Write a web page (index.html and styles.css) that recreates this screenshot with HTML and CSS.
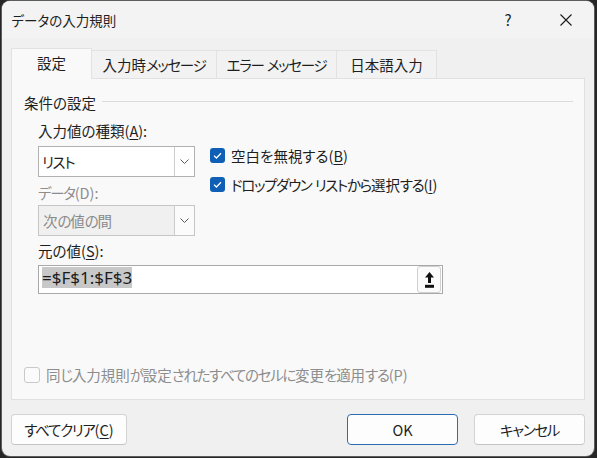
FILE: index.html
```html
<!DOCTYPE html>
<html lang="ja">
<head>
<meta charset="utf-8">
<title>データの入力規則</title>
<link rel="stylesheet" href="styles.css">
</head>
<body>
<div class="window">
  <header class="titlebar">
    <span class="title">データの入力規則</span>
    <div class="caption">
      <span class="cap-btn help">?</span>
      <span class="cap-btn close">
        <svg width="12" height="12" viewBox="0 0 12 12"><path d="M0.5 0.5 L11.5 11.5 M11.5 0.5 L0.5 11.5" stroke="#1b1b1b" stroke-width="1.1" fill="none"/></svg>
      </span>
    </div>
  </header>

  <div class="body">
    <div class="tabs">
      <div class="tab active"><span>設定</span></div>
      <div class="tab"><span>入力時<span class="k">メッセージ</span></span></div>
      <div class="tab"><span><span class="k">エラー</span> <span class="k">メッセージ</span></span></div>
      <div class="tab"><span>日本語入力</span></div>
    </div>

    <section class="panel">
      <div class="legend"><span>条件の設定</span><span class="rule"></span></div>

      <div class="group">
        <div class="fields">
          <div class="col-left">
            <div class="label">入力値の種類(<u>A</u>):</div>
            <div class="combo">
              <span class="combo-text"><span class="k">リスト</span></span>
              <span class="combo-btn">
                <svg width="9" height="5" viewBox="0 0 9 5"><path d="M0.5 0.5 L4.5 4.5 L8.5 0.5" stroke="#5a5a5a" stroke-width="1" fill="none"/></svg>
              </span>
            </div>
            <div class="label muted"><span class="k">データ</span>(D):</div>
            <div class="combo is-disabled">
              <span class="combo-text">次<span class="k">の</span>値<span class="k">の</span>間</span>
              <span class="combo-btn">
                <svg width="9" height="5" viewBox="0 0 9 5"><path d="M0.5 0.5 L4.5 4.5 L8.5 0.5" stroke="#5a5a5a" stroke-width="1" fill="none"/></svg>
              </span>
            </div>
          </div>

          <div class="col-right">
            <div class="check">
              <span class="box checked">
                <svg width="15" height="15" viewBox="0 0 15 15"><path d="M4 7.6 L6.4 10 L11 5.2" stroke="#fff" stroke-width="1.3" fill="none"/></svg>
              </span>
              <span>空白を無視する(<u>B</u>)</span>
            </div>
            <div class="check">
              <span class="box checked">
                <svg width="15" height="15" viewBox="0 0 15 15"><path d="M4 7.6 L6.4 10 L11 5.2" stroke="#fff" stroke-width="1.3" fill="none"/></svg>
              </span>
              <span><span class="k">ドロップダウン</span> <span class="k">リストから</span>選択<span class="k">する</span>(<u>I</u>)</span>
            </div>
          </div>
        </div>

        <div class="label source-label">元の値(<u>S</u>):</div>
        <div class="ref-input">
          <span class="sel">=$F$1:$F$3</span>
          <span class="collapse-btn">
            <svg width="9" height="16" viewBox="0 0 9 16"><path d="M4.5 0 L9 5.5 L6 5.5 L6 11 L3 11 L3 5.5 L0 5.5 Z" fill="#111"/><rect x="0" y="12.8" width="9" height="3" fill="#111"/></svg>
          </span>
        </div>
      </div>

      <div class="check apply muted">
        <span class="box empty"></span>
        <span>同<span class="k">じ</span>入力規則<span class="k">が</span>設定<span class="k">されたすべてのセルに</span>変更<span class="k">を</span>適用<span class="k">する</span>(P)</span>
      </div>
    </section>

    <div class="actions">
      <button class="btn wide"><span class="k">すべてクリア</span>(<u>C</u>)</button>
      <div class="actions-right">
        <button class="btn default">OK</button>
        <button class="btn"><span class="k">キャンセル</span></button>
      </div>
    </div>
  </div>
</div>
</body>
</html>
```

FILE: styles.css
```css
html, body {
  margin: 0;
  width: 597px;
  height: 458px;
  overflow: hidden;
  background: #262626;
}

body {
  font: 14.5px/20px "Noto Sans CJK JP", "Noto Sans", sans-serif;
  font-feature-settings: "palt" 1;
  color: #1e1e1e;
}

/* kana runs are set a little tighter than the kanji */
.k {
  letter-spacing: -1.3px;
}

u {
  text-decoration: underline;
  text-decoration-thickness: 1px;
  text-underline-offset: 2px;
}

/* dialog window */
.window {
  margin: 1px 0 0 2px;
  width: 592px;
  height: 455px;
  background: #f0f0f0;
  border-radius: 8px;
  box-shadow: 0 0 0 1px #5c5c5c;
  display: flex;
  flex-direction: column;
  overflow: hidden;
}

.titlebar {
  flex: none;
  height: 37px;
  display: flex;
  align-items: center;
  padding-left: 9.5px;
  background: #f3f3f3;
}

.title {
  font-size: 13.5px;
}

.caption {
  margin-left: auto;
  margin-right: 5px;
  display: flex;
  gap: 12px;
}

.cap-btn {
  width: 46px;
  height: 37px;
  display: flex;
  align-items: center;
  justify-content: center;
}

.help {
  font-size: 15px;
  color: #222;
}

.body {
  flex: 1;
  display: flex;
  flex-direction: column;
  padding: 10px 9px 11px;
  min-height: 0;
}

/* tab strip */
.tabs {
  flex: none;
  height: 31px;
  margin-bottom: -1px;
  display: grid;
  grid-template-columns: 81px 125px 120px 100px;
  align-items: end;
  position: relative;
  z-index: 1;
}

.tab {
  height: 28px;
  margin-bottom: 1px;
  box-sizing: border-box;
  display: flex;
  align-items: center;
  justify-content: center;
  white-space: nowrap;
  background: #f2f2f2;
  border: 1px solid #e2e2e2;
  border-bottom: none;
  border-left: none;
}

.tab.active {
  height: 31px;
  margin-bottom: 0;
  background: #f9f9f9;
  border-left: 1px solid #e2e2e2;
  padding-bottom: 3px;
}

/* settings page */
.panel {
  flex: 1;
  display: flex;
  flex-direction: column;
  background: #f9f9f9;
  border: 1px solid #e1e1e1;
  padding: 14px 11px 14px 12px;
}

.legend {
  display: flex;
  align-items: center;
}

.rule {
  flex: 1;
  height: 1px;
  background: #dcdcdc;
  margin: 0 0 4px 6px;
}

.group {
  padding-left: 14px;
}

.fields {
  display: flex;
  margin-top: 8px;
}

.col-left {
  width: 157px;
  display: flex;
  flex-direction: column;
}

.col-right {
  margin-left: 15px;
  padding-top: 20px;
}

.label {
  height: 20px;
}

.muted {
  color: #8d8d8d;
}

.combo {
  margin-top: 5px;
  height: 31px;
  box-sizing: border-box;
  display: flex;
  background: #fff;
  border: 1px solid #b1b1b1;
}

.combo + .label {
  margin-top: 6px;
}

.combo.is-disabled {
  margin-top: 2px;
  background: #f0f0f0;
  border-color: #c6c6c6;
  color: #8a8a8a;
}

.combo-text {
  flex: 1;
  padding-left: 3px;
  line-height: 29px;
}

.is-disabled .combo-text {
  padding-left: 4px;
}

.combo-btn {
  width: 20px;
  box-sizing: border-box;
  border-left: 1px solid #cdcdcd;
  background: #fff;
  display: flex;
  align-items: center;
  justify-content: center;
}

.is-disabled .combo-btn {
  background: #fbfbfb;
}

.check {
  height: 29px;
  display: flex;
  align-items: center;
  white-space: nowrap;
}

.box {
  flex: none;
  width: 15px;
  height: 15px;
  margin-right: 6px;
  border-radius: 3px;
  box-sizing: border-box;
}

.box.checked {
  background: #0e5fb5;
}

.box svg {
  display: block;
}

.box.empty {
  width: 16px;
  height: 16px;
  margin-right: 6px;
  background: #fbfbfb;
  border: 1px solid #c9c9c9;
}

.source-label {
  margin-top: 5px;
}

.ref-input {
  margin-top: 4px;
  width: 405px;
  height: 29px;
  box-sizing: border-box;
  display: flex;
  align-items: flex-start;
  background: #fff;
  border: 1px solid #a9a9a9;
  padding-left: 3px;
}

.sel {
  margin-top: 1px;
  font: 17px/21px "Noto Sans", sans-serif;
  background: #c8c8c8;
  color: #1b1b1b;
}

.collapse-btn {
  margin-left: auto;
  margin-right: 1px;
  width: 24px;
  height: 27px;
  box-sizing: border-box;
  border: 1px solid #d0d0d0;
  border-radius: 3px;
  background: #fbfbfb;
  display: flex;
  align-items: center;
  justify-content: center;
}

.check.apply {
  margin-top: auto;
  height: 20px;
}

/* dialog buttons */
.actions {
  flex: none;
  margin-top: 14px;
  display: flex;
  justify-content: space-between;
}

.actions-right {
  display: flex;
  gap: 16px;
}

.btn {
  height: 31px;
  width: 111px;
  box-sizing: border-box;
  padding: 0;
  font: inherit;
  color: #1e1e1e;
  background: #fdfdfd;
  border: 1px solid #d3d3d3;
  border-bottom-color: #c4c4c4;
  border-radius: 4px;
}

.btn.wide {
  width: 116px;
}

.btn.default {
  border-color: #2b6db0;
}
```
